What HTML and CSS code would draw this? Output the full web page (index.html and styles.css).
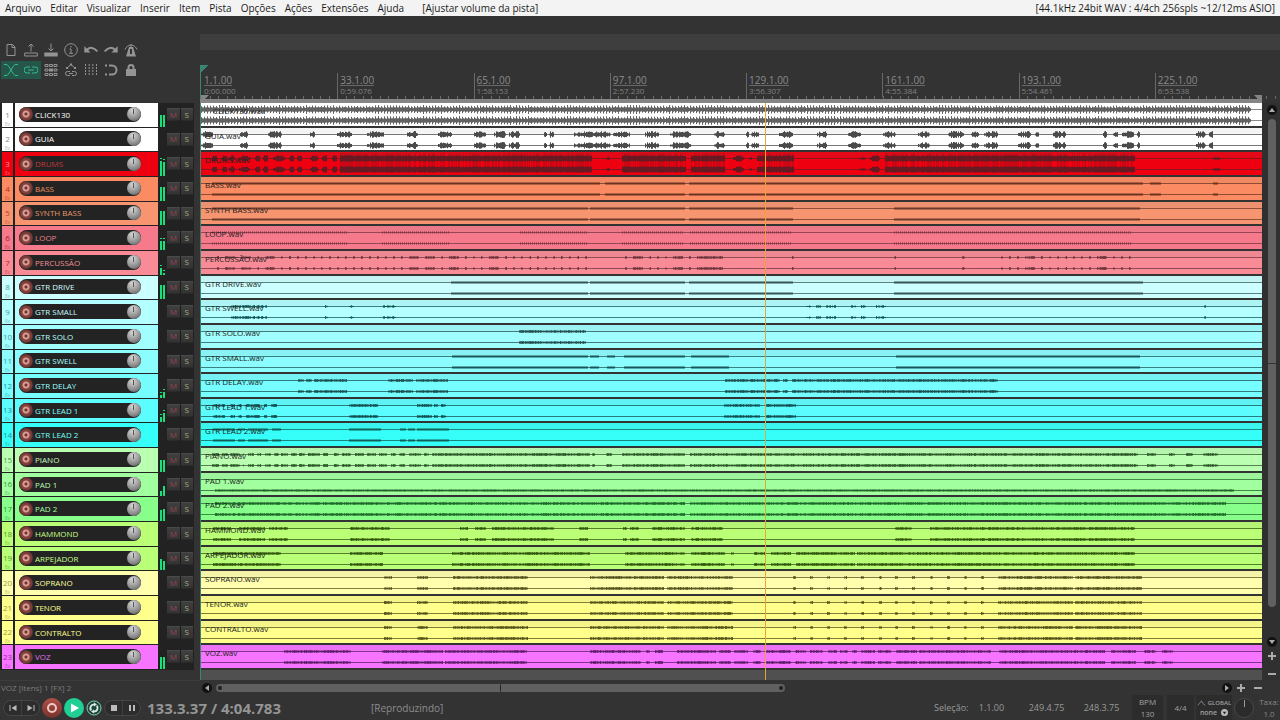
FILE: index.html
```html
<!DOCTYPE html>
<html lang="pt-BR">
<head>
<meta charset="utf-8">
<title>Projeto - 23 pistas</title>
<link rel="stylesheet" href="styles.css">
</head>
<body>
<header class="menubar">
  <nav class="menu">
    <button>Arquivo</button><button>Editar</button><button>Visualizar</button><button>Inserir</button><button>Item</button><button>Pista</button><button>Opções</button><button>Ações</button><button>Extensões</button><button>Ajuda</button>
    <span class="last-action">[Ajustar volume da pista]</span>
  </nav>
  <span class="audio-info">[44.1kHz 24bit WAV : 4/4ch 256spls ~12/12ms ASIO]</span>
</header>

<main class="workspace">
  <section class="tools" aria-label="Ferramentas">
    <button aria-label="Novo projeto"><svg viewBox="0 0 14 14"><path d="M3 1.500h5.500L11 4v8.500H3zM8 1.500V4.500H11"/></svg></button>
    <button aria-label="Abrir projeto"><svg viewBox="0 0 14 14"><path d="M7 8.500V1M4.500 3.500 7 1l2.500 2.500M.7 10h12.600v3H.7z"/></svg></button>
    <button aria-label="Salvar projeto"><svg viewBox="0 0 14 14"><path d="M7 .5v7.500M4.500 5.500 7 8l2.500-2.500"/><path class="solid" d="M.3 9.500h13.400v4H.3z"/></svg></button>
    <button aria-label="Informações"><svg viewBox="0 0 14 14"><circle cx="7" cy="7" r="6.300"/><path d="M5.500 6H7v4M5 10.300h4M7 3v1.500"/></svg></button>
    <button aria-label="Desfazer"><svg viewBox="0 0 14 14"><path class="solid" d="M.3 3v6.500H6.500z"/><path class="heavy" d="M3 6.700C6 4 10 4 13.300 8.500"/></svg></button>
    <button aria-label="Refazer"><svg viewBox="0 0 14 14"><path class="solid" d="M13.700 3v6.500H7.500z"/><path class="heavy" d="M11 6.700C8 4 4 4 .7 8.500"/></svg></button>
    <button aria-label="Metrônomo"><svg viewBox="0 0 14 14"><path class="solid" d="M5 4h4l3 9.500H2z"/><path d="M7 1v3M1 6.500C2 4 4.500 2 7 2s5 2 6 4.500"/><path class="hole" d="M7 6v5"/></svg></button>
    <button class="on" aria-label="Crossfade automático"><svg viewBox="0 0 14 14"><path d="M0 1.500h3C6 4 8 10 11 12.500h3M14 1.500h-3C8 4 6 10 3 12.500H0"/></svg></button>
    <button class="on" aria-label="Agrupar itens"><svg viewBox="0 0 14 14"><path class="heavy" d="M6 4H3a3 3 0 0 0 0 6h3M8 4h3a3 3 0 0 1 0 6H8M4 7h6"/></svg></button>
    <button aria-label="Edição ripple"><svg viewBox="0 0 14 14"><path d="M1 1.500h3v2H1zM5.500 1.500h3v2h-3zM10 1.500h3v2h-3zM1 6h3v2H1zM10 6h3v2h-3zM1 10.500h3v2H1zM5.500 10.500h3v2h-3zM10 10.500h3v2h-3z"/><path class="solid" d="M5 5.500h4v3H5z"/></svg></button>
    <button aria-label="Mover envelopes"><svg viewBox="0 0 14 14"><path d="M3 5 7 1.500 11 5M6 8.500H3.500a2 2 0 0 0 0 4H6M8 8.500h2.500a2 2 0 0 1 0 4H8M5 10.500h4"/><path class="solid" d="M2 4h2v2H2zM6 .5h2v2H6zM10 4h2v2h-2z"/></svg></button>
    <button aria-label="Grade"><svg viewBox="0 0 14 14"><path class="dash" d="M1.500 1v12M5.200 1v12M8.800 1v12M12.500 1v12"/></svg></button>
    <button aria-label="Aderir"><svg viewBox="0 0 14 14"><path class="heavy" d="M5 2.500h3a4.500 4.500 0 0 1 0 9H5"/><path class="heavy" d="M1 2.500h2M1 11.500h2"/></svg></button>
    <button aria-label="Travar"><svg viewBox="0 0 14 14"><path class="solid" d="M2 6h10v7H2z"/><path class="heavy" d="M4.500 7V4.500a2.500 2.500 0 0 1 5 0V7"/></svg></button>
  </section>

  <section class="timeline">
    <div class="region-band"></div>
    <div class="ruler" id="ruler"></div>
    <div class="loop-bar"></div>
  </section>

  <section class="track-panel" id="panel" aria-label="Pistas"></section>
  <section class="arrange" aria-label="Arranjo">
    <div class="lanes" id="lanes"></div>
    <i class="playhead"></i>
  </section>
  <aside class="vscroll">
    <button class="round" aria-label="Subir"><svg viewBox="0 0 10 10"><path d="M5 3 8 7H2z"/></svg></button>
    <div class="vtrack"><div class="vthumb"></div></div>
    <button class="round" aria-label="Descer"><svg viewBox="0 0 10 10"><path d="M5 7 8 3H2z"/></svg></button>
    <button class="zoom" aria-label="Ampliar vertical"><svg viewBox="0 0 10 10"><path d="M1 4h3V1h2v3h3v2H6v3H4V6H1z"/></svg></button>
    <button class="zoom" aria-label="Reduzir vertical"><svg viewBox="0 0 10 10"><path d="M1 4h8v2H1z"/></svg></button>
  </aside>

  <div class="hint">VOZ [itens] 1 [FX] 2</div>
  <div class="hscroll">
    <button class="round" aria-label="Esquerda"><svg viewBox="0 0 10 10"><path d="M3 5 7 2v6z"/></svg></button>
    <div class="htrack"><div class="hthumb"><i></i><i class="mid"></i><i></i></div></div>
    <button class="round" aria-label="Direita"><svg viewBox="0 0 10 10"><path d="M7 5 3 2v6z"/></svg></button>
    <button class="zoom" aria-label="Ampliar horizontal"><svg viewBox="0 0 10 10"><path d="M1 4h3V1h2v3h3v2H6v3H4V6H1z"/></svg></button>
    <button class="zoom" aria-label="Reduzir horizontal"><svg viewBox="0 0 10 10"><path d="M1 4h8v2H1z"/></svg></button>
  </div>
</main>

<footer class="transport">
  <div class="buttons">
    <div class="pill">
      <button aria-label="Início"><svg viewBox="0 0 10 10"><path d="M1.500 2h1v6h-1zM8.500 2v6L3.500 5z"/></svg></button>
      <button aria-label="Fim"><svg viewBox="0 0 10 10"><path d="M7.500 2h1v6h-1zM1.500 2v6l5-3z"/></svg></button>
    </div>
    <button class="rec" aria-label="Gravar"><svg viewBox="0 0 20 20"><circle cx="10" cy="10" r="4"/></svg></button>
    <button class="play" aria-label="Reproduzir"><svg viewBox="0 0 20 20"><path d="M7 5.500v9l8-4.500z"/></svg></button>
    <button class="loop" aria-label="Repetir"><svg viewBox="0 0 16 16"><circle cx="8" cy="8" r="7"/><path class="arrows" d="M5.200 10.300a3.600 3.600 0 0 1 3-5.900M10.800 5.700a3.600 3.600 0 0 1-3 5.900"/><path class="heads" d="M8 2.500l3 2-3 2zM8 9.500v4l-3-2z"/></svg></button>
    <div class="pill">
      <button aria-label="Parar"><svg viewBox="0 0 10 10"><path d="M2 2h6v6H2z"/></svg></button>
      <button aria-label="Pausar"><svg viewBox="0 0 10 10"><path d="M2 2h2v6H2zM6 2h2v6H6z"/></svg></button>
    </div>
  </div>
  <output class="time">133.3.37 / 4:04.783</output>
  <span class="state">[Reproduzindo]</span>
  <div class="selection"><span>Seleção:</span><span>1.1.00</span><span>249.4.75</span><span>248.3.75</span></div>
  <div class="box bpm"><span>BPM</span><span>130</span></div>
  <div class="box sig">4/4</div>
  <div class="box global">
    <span><svg class="env" viewBox="0 0 10 8"><path d="M0 7 2 5 5 1 7 5l3 2"/></svg>GLOBAL</span>
    <span>none <svg class="drop" viewBox="0 0 8 8"><circle cx="4" cy="4" r="4"/><path d="M2 3h4L4 6z"/></svg></span>
  </div>
  <input class="rate-knob" type="range" aria-label="Taxa de reprodução">
  <div class="rate"><span>Taxa:</span><span>1.0</span></div>
</footer>
<script src="app.js"></script>
</body>
</html>
```
FILE: styles.css
```css
* { box-sizing: border-box; }
body {
  margin: 0;
  min-height: 100vh;
  display: flex;
  flex-direction: column;
  background: #333;
  color: #8d8d8d;
  font-family: "Open Sans", "Noto Sans", sans-serif;
  font-size: 9px;
  overflow: hidden;
}
button, input { font: inherit; color: inherit; background: none; border: 0; margin: 0; padding: 0; }
svg { display: block; }

.menubar {
  display: flex;
  justify-content: space-between;
  align-items: center;
  height: 16px;
  padding: 0 5px;
  background: #f3f3f3;
  color: #1c1c1c;
  font-size: 10px;
  white-space: nowrap;
}
.menu { display: flex; gap: 9px; }
.last-action { margin-left: 9px; }

.workspace {
  flex: 1;
  display: grid;
  grid-template-columns: 200px minmax(0, 1fr) 18px;
  grid-template-rows: 87px 1fr 14px;
}

.tools {
  display: grid;
  grid-template-columns: repeat(7, 20px);
  grid-auto-rows: 20px;
  padding: 24px 0 0 1px;
}
.tools button { display: grid; place-items: center; }
.tools svg { width: 14px; height: 14px; fill: none; stroke: #949494; stroke-width: 1; }
.tools .solid { fill: #949494; stroke: none; }
.tools .heavy { stroke-width: 2; }
.tools .hole { stroke: #333; stroke-width: 2; }
.tools .dash { stroke-dasharray: 2 1; }
.tools .on { background: #24574a; background-clip: content-box; padding: 1px 0; }
.tools .on svg { stroke: #36b98c; }
.tools .on .heavy { stroke-width: 1; }

.timeline { grid-column: 2 / 4; display: flex; flex-direction: column; padding-top: 18px; }
.region-band { height: 16px; background: #3e3e3e; }
.ruler {
  flex: 1;
  display: grid;
  grid-template-columns: repeat(7, 136fr) 107fr;
  align-items: end;
  margin: 15px 18px 0 0;
  border-left: 1px solid #3c8573;
  background: linear-gradient(135deg, #3c8573 5px, transparent 5px) no-repeat;
  position: relative;
}
.mark { padding: 2px 0 0 2px; height: 24px; margin-bottom: 2px; border-left: 1px solid #686868; white-space: nowrap; }
.mark:first-child { border-color: transparent; }
.mark b { display: block; width: max-content; font-weight: 400; font-size: 10px; line-height: 10px; border-bottom: 1px solid #686868; color: #8a8a8a; }
.mark span { display: block; font-size: 8px; line-height: 10px; color: #808080; }
.ticks { position: absolute; left: 0; bottom: 0; width: 100%; height: 3px; overflow: visible; stroke: #6a6a6a; }
.ticks .ends { fill: #858585; stroke: none; }
.loop-bar { height: 4px; margin-right: 18px; background: #858585; }

.track-panel {
  display: grid;
  grid-auto-rows: 1fr;
  padding: 0 0 10px 2px;
  background: linear-gradient(#333, #333) bottom / 100% 10px no-repeat, linear-gradient(90deg, #222 194px, #333 194px);
}
.track { display: grid; grid-template-columns: 11px 145px 9px 26px; min-height: 0; }
.track-no {
  margin-bottom: 1px;
  display: flex;
  flex-direction: column;
  align-items: center;
  justify-content: flex-end;
  background: var(--c);
  color: var(--n);
  font-size: 8px;
  line-height: 12px;
}
.track-no small { font-size: 5px; line-height: 6px; opacity: .6; }
.strip { display: flex; align-items: center; margin: 0 0 1px 2px; padding: 0 17px 1px 4px; background: var(--c); }
.track-bar {
  flex: 1;
  display: flex;
  align-items: center;
  height: 15px;
  border-radius: 8px;
  background: #232323;
  color: var(--t);
  font-size: 8px;
}
.track-bar span { flex: 1; padding-left: 2px; white-space: nowrap; font-weight: 500; }
.arm { width: 14px; height: 14px; border-radius: 50%; background: radial-gradient(circle, #74332f 0 1px, #d69c94 2px 3px, #84413c 4px 5px, #54302c 7px); }
.knob { appearance: none; width: 14px; height: 14px; border-radius: 50%; background: linear-gradient(#555, #555) 6px 2px / 1px 5px no-repeat, radial-gradient(circle at 40% 25%, #d6d6d6, #999 50%, #555); }
.knob::-webkit-slider-thumb, .rate-knob::-webkit-slider-thumb { appearance: none; width: 0; height: 0; }
.meter { display: flex; align-items: flex-end; justify-content: center; gap: 1px; padding: 0 1px 1px 0; }
.meter i { width: 2px; background: #18e07a; }
.meter .peak { border-top: 1px solid #18e07a; background: linear-gradient(#222 2px, #18e07a 2px); }
.ms { display: grid; grid-template-columns: 1fr 1fr; gap: 1px; align-self: start; margin-top: 5px; height: 13px; background: #1b1b1b; }
.ms button { font-size: 8px; line-height: 10px; border-top: 1px solid #4a4a4a; border-bottom: 1px solid #2a2a2a; background: linear-gradient(#3f3f3f, #333); }
.ms .mute { color: #9a4650; }
.ms .solo { color: #a8ae7c; }

.arrange { position: relative; border-left: 1px solid #3c8573; padding-bottom: 10px; background: #505050; display: grid; }
.lanes { display: grid; grid-auto-rows: 1fr; background: #333; min-height: 0; }
.item { position: relative; min-height: 0; margin-bottom: 2px; background: linear-gradient(rgba(110, 110, 110, .08) 5px, transparent 7px), var(--c); color: var(--w); overflow: hidden; }
.item:first-child { background: var(--c); }
.wave { width: 100%; height: 22px; stroke: currentColor; fill: none; stroke-width: 1; }
.item-name { position: absolute; left: 4px; top: 3px; font-size: 8px; line-height: 10px; color: #222; }
.item-name.late { left: 12px; }
.playhead { position: absolute; z-index: 1; top: 0; bottom: 0; left: 53.2%; width: 1px; background: #e8a534; }

.vscroll { display: flex; flex-direction: column; align-items: center; gap: 4px; padding: 2px 0 1px 2px; background: #303030; }
.round { flex: none; width: 10px; height: 10px; border-radius: 50%; background: #111; }
.round svg, .zoom svg { width: 10px; height: 10px; fill: #aaa; }
.vtrack { flex: 1; width: 8px; }
.vthumb { height: 95%; border-radius: 4px; background: linear-gradient(#333, #333) 0 50% / 100% 1px no-repeat, #606060; }
.zoom { flex: none; width: 10px; height: 10px; }
.vscroll .zoom:last-child { margin-top: 4px; }

.hint { padding-left: 1px; border-top: 1px solid #3c3c3c; font-size: 8px; line-height: 14px; color: #7c7c7c; }
.hscroll { grid-column: 2 / 4; display: flex; align-items: center; padding: 1px 17px 0 2px; gap: 7px; }
.hscroll .round:first-child { margin-right: -3px; }
.hscroll .round + .zoom { margin-left: -3px; }
.htrack { flex: 1; }
.hthumb { width: 57%; height: 8px; padding: 0 2px; border-radius: 4px; background: #606060; display: flex; align-items: center; justify-content: space-between; }
.hthumb i { width: 4px; height: 4px; border-radius: 50%; background: #1e1e1e; }
.hthumb .mid { width: 1px; height: 8px; }

.transport { display: flex; align-items: center; height: 26px; padding-top: 1px; white-space: nowrap; }
.buttons { display: flex; align-items: center; gap: 2px; width: 147px; padding-left: 3px; }
.pill { display: flex; width: 37px; height: 16px; border: 1px solid #454545; border-radius: 8px; background: #2c2c2c; }
.pill button { flex: 1; display: grid; place-items: center; }
.pill button + button { border-left: 1px solid #414141; }
.pill svg { width: 10px; height: 10px; fill: #bbb; }
.rec, .play { width: 20px; height: 20px; border-radius: 50%; }
.rec { background: linear-gradient(#b05047, #79312c); }
.rec svg { fill: none; stroke: #eccbc6; stroke-width: 2; }
.play { background: #20cf94; }
.play svg { fill: #fff; }
.loop { width: 16px; height: 16px; border-radius: 50%; background: #1e453b; }
.loop svg { fill: none; stroke: #8fc4b4; stroke-width: 1; }
.loop .arrows { stroke: #d5e8e2; stroke-width: 2; }
.loop .heads { fill: #d5e8e2; stroke: none; }
.time { width: 224px; font-size: 15px; font-weight: 700; color: #959595; }
.state { font-size: 10px; }
.selection { margin-left: auto; display: grid; grid-template-columns: 30px repeat(3, 55px); text-align: center; color: #9a9a9a; }
.box { display: flex; flex-direction: column; align-items: center; justify-content: center; align-self: stretch; background: #2c2c2c; font-size: 8px; line-height: 12px; color: #a0a0a0; }
.bpm { width: 31px; margin-left: 3px; }
.sig { width: 27px; margin-left: 4px; }
.global { width: 36px; margin-left: 2px; font-size: 6px; line-height: 10px; font-weight: 600; }
.global span { display: flex; align-items: center; gap: 2px; }
.global span + span { font-size: 7px; gap: 4px; }
.env { width: 9px; height: 6px; fill: none; stroke: #999; }
.drop { width: 7px; height: 7px; fill: #bbb; }
.drop path { fill: #222; }
.rate-knob { appearance: none; width: 20px; height: 20px; margin: 0 4px 0 2px; border: 1px solid #484848; border-radius: 50%; background: linear-gradient(#999, #999) 50% 1px / 1px 7px no-repeat, #2b2b2b; }
.rate { display: flex; flex-direction: column; width: 22px; font-size: 8px; line-height: 12px; align-items: center; color: #858585; }
```
FILE: app.js
```js
// name, item name, colour, name tint, number tint, wave colour, meter levels, wave kind, segments
// Segments are start-end positions on a timeline that is 1061 units long.
const BEATS = '592-595 609-612 626-629 643-646 660-663 678-681 694-697 711-714 729-732 746-749 763-766 780-783';
const CHOIR = '183-191 216-227 252-327 389-463 466-532 ' + BEATS + ' 797-872 874-941';
const TRACKS = [
  ['CLICK130', 'CLICK130.wav', '#ffffff', '#fff', '#888', '#626262', [12, 12], 'click', '0-1050'],
  ['GUIA', 'GUIA.wav', '#ffffff', '#fff', '#888', '#4a4a4a', [], 'voice', '0-12 39-47 67-81 109-114 136-151 166-183 206-217 237-251 273-285 293-305 308-319 343-346 348-353 373-410 412-429 444-458 469-490 513-524 545-548 550-558 578-592 616-626 647-660 682-695 717-729 747-763 770-778 783-797 817-830 834-838 852-865 902-906 912-917 921-933 936-939 995-1005 1008-1012'],
  ['DRUMS', 'DRUMS.wav', '#ee0010', '#c03a40', '#ff9a9a', '#681a22', [18, 17, 1], 'drums', '11-16 21-26 28-34 38-49 54-59 62-67 72-84 88-93 96-101 109-117 121-126 131-136 139-391 405-409 421-485 490-524 532-543 548-551 556-593 658-665 669-679 684-934 1011-1020'],
  ['BASS', 'BASS.wav', '#fa8b62', '#e8905f', '#b8301a', '#6b3422', [14, 14], 'line', '11-399 404-484 488-942 949-960 1012-1017'],
  ['SYNTH BASS', 'SYNTH BASS.wav', '#f69570', '#e89a6c', '#b83c22', '#6b3a2a', [14, 14], 'line', '11-387 389-484 488-592 693-939'],
  ['LOOP', 'LOOP.wav', '#f67a8b', '#e8808c', '#a01830', '#7a3640', [12, 12, 1], 'dots', '11-147 181-249 318-386 421-482 488-591 693-930'],
  ['PERCUSSÃO', 'PERCUSSÃO.wav', '#f98b97', '#ee8f99', '#a62c40', '#6d353e', [10, 5, 1], 'blips', '11-389 421-524 591-593 693-695 761-764 795-934 1012-1015'],
  ['GTR DRIVE', 'GTR DRIVE.wav', '#ccffff', '#d8ffff', '#4a9a9a', '#365555', [14, 14], 'line', '250-387 389-484 488-592 693-942'],
  ['GTR SMALL', 'GTR SWELL.wav', '#b4ffff', '#c8ffff', '#4a9a9a', '#155', [], 'sparse', '20-66 124-127 148-153 182-204 593-689 987-991 1003-1005'],
  ['GTR SOLO', 'GTR SOLO.wav', '#a0feff', '#b8ffff', '#4a9a9a', '#254f50', [], 'rough', '318-385'],
  ['GTR SWELL', 'GTR SMALL.wav', '#8cfdff', '#a8ffff', '#3a9a9a', '#1d5556', [], 'line', '251-387 389-398 406-414 423-484 490-528 695-939'],
  ['GTR DELAY', 'GTR DELAY.wav', '#76fdff', '#98ffff', '#2a9a9a', '#1b5152', [6, 9, 1], 'rough', '97-103 105-111 113-146 187-212 215-247 524-579 582-587 591-797'],
  ['GTR LEAD 1', 'GTR LEAD 1.wav', '#5cfdff', '#80ffff', '#1a9a9a', '#145052', [8, 12, 1], 'rough', '12-24 29-34 37-41 45-59 63-66 70-76 148-177 216-231 233-237 240-245 523-559 564-595'],
  ['GTR LEAD 2', 'GTR LEAD 2.wav', '#36fff9', '#70fff8', '#1a9a9a', '#106058', [], 'line', '12-34 37-44 47-67 71-80 148-180 199-205 207-214 216-248'],
  ['PIANO', 'PIANO.wav', '#bbffb3', '#c8ffc0', '#4a9a4a', '#2e5a2a', [12, 12], 'rough', '11-18 21-27 29-39 42-43 47-53 56-60 64-70 73-78 80-87 90-96 98-104 107-119 122-127 133-138 141-150 154-163 166-175 178-186 190-195 198-204 208-220 223-228 231-389 391-394 405-411 421-484 489-937 946-955 968-974 985-992 1002-1017'],
  ['PAD 1', 'PAD 1.wav', '#a2ff9f', '#b4ffb0', '#3a9a3a', '#226326', [5, 10], 'low', '14-1033'],
  ['PAD 2', 'PAD 2.wav', '#88ff8a', '#a0ffa0', '#2a9a3a', '#1f6a2a', [11, 12], 'rough', '14-484 489-1025'],
  ['HAMMOND', 'HAMMOND.wav', '#baff76', '#c6ff88', '#5a9a2a', '#33560f', [], 'rough', '12-30 38-64 68-87 149-189 259-267 274-285 291-353 378-387 422-426 429-438 451-484 490-522 694-711 729-934'],
  ['ARPEJADOR', 'ARPEJADOR.wav', '#b9ff78', '#c6ff88', '#5a9a2a', '#33560f', [11, 9], 'rough', '12-80 149-182 251-389 424-484 490-524 530-533 553-565 570-590 595-654 656-934'],
  ['SOPRANO', 'SOPRANO.wav', '#ffffae', '#ffffa0', '#9a9a4a', '#55531f', [], 'rough', CHOIR],
  ['TENOR', 'TENOR.wav', '#ffff8c', '#ffff90', '#9a9a3a', '#55531a', [], 'rough', CHOIR],
  ['CONTRALTO', 'CONTRALTO.wav', '#ffff8c', '#ffff90', '#9a9a3a', '#55531a', [], 'rough', CHOIR],
  ['VOZ', 'VOZ.wav', '#f674ff', '#e070ee', '#9a2a9a', '#5f1f68', [12, 12], 'rough', '83-150 181-242 244-326 389-440 445-449 454-462 476-515 518-530 533-547 552-560 564-590 594-605 609-622 627-636 639-647 651-656 660-674 677-690 695-716 718-790 798-904 910-935 943-955 961-972'],
];

// Repeatable noise in the range 0..1.
const noise = (x, seed) => {
  const v = Math.sin(x * 12.9898 + seed * 78.233) * 43758.5453;
  return v - Math.floor(v);
};

// Half-height of the wave at x, for each kind of signal.
const SHAPES = {
  click: (x, r) => (x % 3 === 0 ? 3 + r * 1.5 : x % 3 === 1 ? 2.2 : 1.4 + r),
  voice: (x, r, p) => (1.3 + 2.2 * r) * (p < .12 || p > .88 ? .6 : 1),
  drums: (x, r, p, len) => (len < 10 && x > 390 ? 1.2 : 2.4 + r * .8) * (len < 20 && (p < .2 || p > .8) ? .5 : 1),
  line: () => 1,
  dots: x => (x % 2 ? 1 : 0),
  blips: (x, r) => (x % 8 < 2 || noise(Math.floor(x / 8), 3) > .8 ? .8 + r * .6 : 0),
  sparse: (x, r) => (noise(Math.floor(x / 5), 5) > .45 ? .4 + r : 0),
  rough: (x, r) => .8 + r * .6,
  low: (x, r) => .8 + r * .3,
};

function wave(kind, segments, seed) {
  let d = '';
  let halo = '';
  for (const seg of segments.split(' ')) {
    const [a, b] = seg.split('-').map(Number);
    for (let x = a; x < b; x++) {
      const r = noise(x, seed);
      const h = SHAPES[kind](x, r, (x - a) / (b - a), b - a);
      if (!h) continue;
      if (kind === 'drums' && b - a > 30 && r > .3) halo += `M${x + .5} 1V21`;
      for (const y of kind === 'low' ? [17.5] : [6.5, 17.5]) {
        d += `M${x + .5} ${(y - h).toFixed(1)}V${(y + h).toFixed(1)}`;
      }
    }
  }
  return `<svg class="wave" viewBox="0 0 1061 22" preserveAspectRatio="none" aria-hidden="true">
    <path d="M0 6.5H1061M0 17.5H1061" opacity=".75"/><path d="${halo}" opacity=".25"/><path d="${d}"/></svg>`;
}

const panel = document.getElementById('panel');
const lanes = document.getElementById('lanes');
TRACKS.forEach(([name, item, c, t, n, w, levels, kind, segs], i) => {
  const vars = `--c:${c};--t:${t};--n:${n};--w:${w}`;
  const bars = levels.slice(0, 2).map(h => `<i class="${levels[2] ? 'peak' : ''}" style="height:${h}px"></i>`).join('');
  panel.insertAdjacentHTML('beforeend', `<div class="track" style="${vars}">
    <div class="track-no">${i + 1}<small>8x</small></div>
    <div class="strip"><div class="track-bar">
      <button class="arm" aria-label="Armar ${name}"></button><span>${name}</span>
      <input class="knob" type="range" aria-label="Volume ${name}">
    </div></div>
    <div class="meter">${bars}</div>
    <div class="ms"><button class="mute">M</button><button class="solo">S</button></div>
  </div>`);
  lanes.insertAdjacentHTML('beforeend', `<div class="item" style="${vars}">${wave(kind, segs, i + 1)}
    <span class="item-name${i ? '' : ' late'}">${item}</span></div>`);
});

const MARKS = [['1.1.00', '0:00.000'], ['33.1.00', '0:59.076'], ['65.1.00', '1:58.153'], ['97.1.00', '2:57.230'],
  ['129.1.00', '3:56.307'], ['161.1.00', '4:55.384'], ['193.1.00', '5:54.461'], ['225.1.00', '6:53.538']];
let ticks = '';
for (let k = 0; k < 127; k++) ticks += `M${Math.round(k * 8.52) + .5} 0V3`;
document.getElementById('ruler').innerHTML =
  MARKS.map(([bar, time]) => `<div class="mark"><b>${bar}</b><span>${time}</span></div>`).join('') +
  `<svg class="ticks" viewBox="0 0 1061 3" preserveAspectRatio="none"><path d="${ticks}"/>
   <path class="ends" d="M0-1H8L4 3H0zM1061-1H1053L1057 3H1061z"/></svg>`;
```
